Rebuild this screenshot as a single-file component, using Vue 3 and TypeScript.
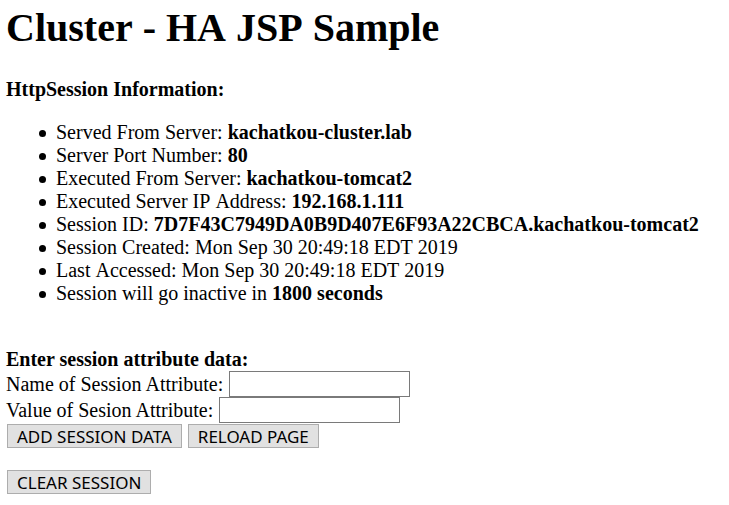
<script setup lang="ts">
import { ref } from 'vue'

interface InfoRow {
  label: string
  value: string
  strong: boolean
}

const rows: InfoRow[] = [
  { label: 'Served From Server:', value: 'kachatkou-cluster.lab', strong: true },
  { label: 'Server Port Number:', value: '80', strong: true },
  { label: 'Executed From Server:', value: 'kachatkou-tomcat2', strong: true },
  { label: 'Executed Server IP Address:', value: '192.168.1.111', strong: true },
  { label: 'Session ID:', value: '7D7F43C7949DA0B9D407E6F93A22CBCA.kachatkou-tomcat2', strong: true },
  { label: 'Session Created:', value: 'Mon Sep 30 20:49:18 EDT 2019', strong: false },
  { label: 'Last Accessed:', value: 'Mon Sep 30 20:49:18 EDT 2019', strong: false },
  { label: 'Session will go inactive in', value: '1800 seconds', strong: true },
]

const attrName = ref('')
const attrValue = ref('')
</script>

<template>
  <main class="page">
    <h1 class="title">Cluster - HA JSP Sample</h1>
    <h2 class="heading">HttpSession Information:</h2>
    <ul class="info">
      <li v-for="row in rows" :key="row.label" class="item">
        <span>{{ row.label }} <component :is="row.strong ? 'b' : 'span'">{{ row.value }}</component></span>
      </li>
    </ul>
    <form class="form" @submit.prevent>
      <h2 class="heading">Enter session attribute data:</h2>
      <div class="field">
        <label for="attr-name">Name of Session Attribute:</label>
        <input id="attr-name" v-model="attrName" class="text" type="text" />
      </div>
      <div class="field">
        <label for="attr-value">Value of Sesion Attribute:</label>
        <input id="attr-value" v-model="attrValue" class="text" type="text" />
      </div>
      <div class="actions">
        <button class="btn" type="submit">ADD SESSION DATA</button>
        <button class="btn" type="button">RELOAD PAGE</button>
      </div>
    </form>
    <form class="clear" @submit.prevent>
      <button class="btn" type="submit">CLEAR SESSION</button>
    </form>
  </main>
</template>

<style>
body {
  background: #fff;
}
</style>

<style scoped>
.page {
  padding: 5px 6px;
  font-family: "Liberation Serif", "Times New Roman", serif;
  font-size: 20px;
  line-height: 23px;
  color: #000;
}

.title {
  margin: 0;
  font-size: 40px;
  line-height: 46px;
  font-kerning: none;
}

.heading {
  margin: 0;
  font-size: 20px;
  line-height: 23px;
}

.title + .heading {
  margin-top: 27px;
}

.info {
  margin: 20px 0 0;
  padding-left: 33px;
  list-style: none;
  font-kerning: none;
}

.info b {
  font-kerning: normal;
}

.item {
  display: flex;
  gap: 10px;
}

.item::before {
  content: "";
  flex: none;
  width: 7px;
  height: 7px;
  margin-top: 9px;
  border-radius: 50%;
  background: #000;
}

.form {
  margin-top: 43px;
}

.field {
  display: flex;
  align-items: center;
  gap: 6px;
  height: 26px;
  line-height: 28px;
}

.text {
  box-sizing: border-box;
  width: 181px;
  height: 26px;
  padding: 1px 4px;
  border: 1px solid #7a7a7a;
  background: #fff;
  font: 17px "Noto Sans", sans-serif;
}

.actions {
  display: flex;
  gap: 6px;
  padding: 1px 1px 0;
}

.btn {
  height: 24px;
  padding: 0 9px;
  border: 1px solid #adadad;
  border-radius: 0;
  background: #e1e1e1;
  color: #000;
  font: 17px/24px "Noto Sans", sans-serif;
}

.clear {
  display: flex;
  margin-top: 22px;
  padding-left: 1px;
}
</style>
